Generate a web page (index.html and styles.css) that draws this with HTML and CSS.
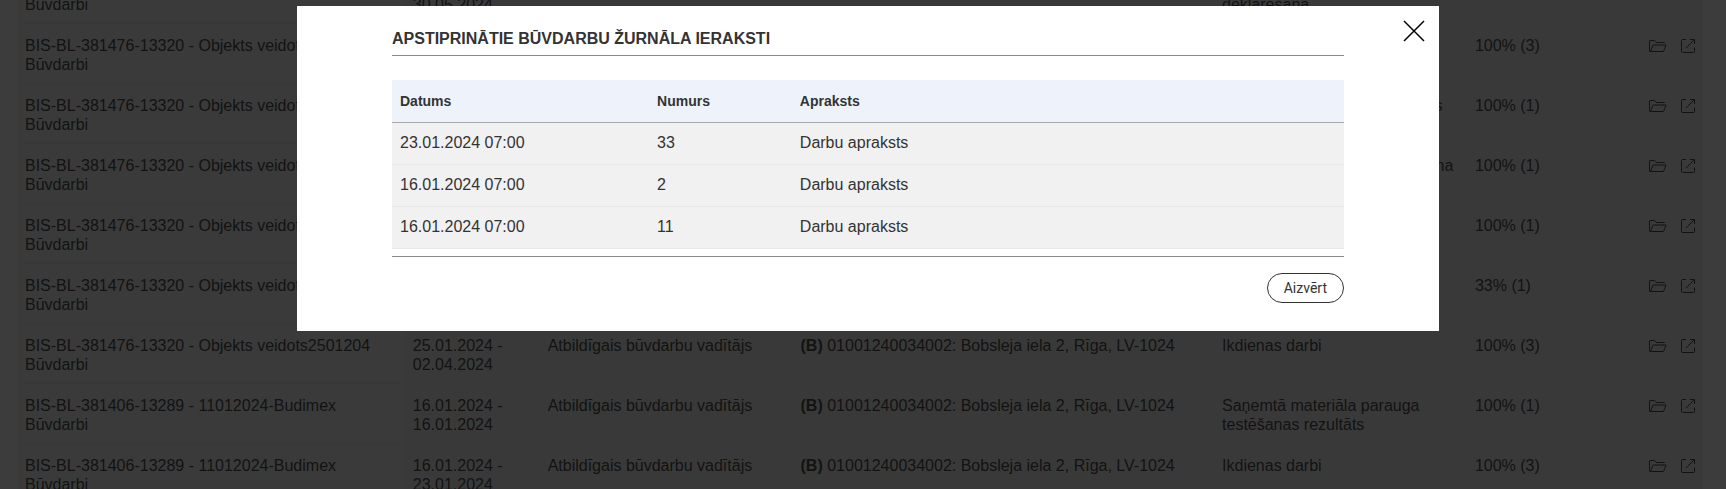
FILE: index.html
```html
<!DOCTYPE html>
<html lang="lv">
<head>
    <meta charset="UTF-8">
    <meta name="viewport" content="width=device-width, initial-scale=1.0">
    <title>Būvdarbu žurnāls</title>
    <link rel="stylesheet" href="styles.css">
</head>
<body>
    <svg class="sprite" aria-hidden="true">
        <symbol id="icon-folder" viewBox="0 0 18 14">
            <path d="M.5 12.500V2q0-.5.5-.5h4.500l2 2h8q.5 0 .5.5M1 12.500h13q.5 0 .7-.5l2.300-6h-12.500q-.5 0-.7.5l-2.300 6"/>
        </symbol>
        <symbol id="icon-open" viewBox="0 0 14 14">
            <path d="M5 .5H1.500q-1 0-1 1v11q0 1 1 1h11q1 0 1-1V8.500M5 9L13.500.5M9 .5h4.500V5"/>
        </symbol>
    </svg>

    <main class="page">
        <table class="journal">
            <colgroup>
                <col class="col-case">
                <col class="col-period">
                <col class="col-role">
                <col class="col-object">
                <col class="col-work">
                <col class="col-actions">
            </colgroup>
            <tbody id="journal-rows"></tbody>
        </table>
    </main>

    <div class="overlay">
        <div class="modal" role="dialog" aria-modal="true" aria-labelledby="modal-title">
            <button type="button" class="modal-close" aria-label="Aizvērt logu">
                <svg viewBox="0 0 20 20"><path d="M0 0L20 20M20 0L0 20"/></svg>
            </button>
            <h2 id="modal-title">Apstiprinātie būvdarbu žurnāla ieraksti</h2>
            <table class="entries">
                <thead>
                    <tr>
                        <th class="col-date">Datums</th>
                        <th class="col-number">Numurs</th>
                        <th>Apraksts</th>
                    </tr>
                </thead>
                <tbody>
                    <tr>
                        <td>23.01.2024 07:00</td>
                        <td>33</td>
                        <td>Darbu apraksts</td>
                    </tr>
                    <tr>
                        <td>16.01.2024 07:00</td>
                        <td>2</td>
                        <td>Darbu apraksts</td>
                    </tr>
                    <tr>
                        <td>16.01.2024 07:00</td>
                        <td>11</td>
                        <td>Darbu apraksts</td>
                    </tr>
                </tbody>
            </table>
            <div class="modal-footer">
                <button type="button" class="btn">Aizvērt</button>
            </div>
        </div>
    </div>

    <script src="script.js"></script>
</body>
</html>
```

FILE: styles.css
```css
* {
    box-sizing: border-box;
}
body {
    margin: 0;
    height: 100vh;
    overflow: hidden;
    background: #fff;
    color: #333;
    font-family: "Liberation Sans", Arial, sans-serif;
    font-size: 16px;
    line-height: 18px;
}
table {
    width: 100%;
    border-collapse: separate;
    border-spacing: 0;
    table-layout: fixed;
}
svg {
    display: block;
    fill: none;
    stroke: currentColor;
}
.sprite {
    display: none;
}

/* saraksts */
.page {
    padding: 0 23px 0 17px;
}
.journal {
    margin-top: -36px;
    background: #f1f1f1;
    line-height: 19px;
}
.col-case {
    width: 23%;
}
.col-period {
    width: 8%;
}
.col-role,
.col-work {
    width: 15%;
}
.col-object {
    width: 25%;
}
.col-actions {
    width: 14%;
}
.journal td {
    height: 60px;
    padding: 12px 8px 9px;
    border-bottom: 1px solid #eaeaea;
    vertical-align: top;
}
.journal td:first-child {
    background: #f6f6f6;
}
.progress {
    display: flex;
    justify-content: space-between;
}
.actions {
    display: flex;
    align-items: center;
    gap: 14px;
}
.actions a {
    color: inherit;
}
.icon-folder {
    width: 18px;
    height: 14px;
}
.icon-open {
    width: 14px;
    height: 14px;
}

/* modālais logs */
.overlay {
    position: fixed;
    inset: 0;
    padding: 6px 0 0 10px;
    background: rgba(11, 11, 11, 0.8);
}
.modal {
    position: relative;
    max-width: 1142px;
    margin: 0 auto;
    padding: 20px 95px 28px;
    background: #fff;
}
.modal h2 {
    margin: 0 0 24px;
    padding: 4px 0 7px;
    border-bottom: 1px solid #888;
    font-size: 16px;
    line-height: 18px;
    text-transform: uppercase;
}
.modal-close {
    position: absolute;
    top: 10px;
    right: 10px;
    padding: 5px;
    border: 0;
    background: none;
    color: #000;
    cursor: pointer;
}
.modal-close svg {
    width: 20px;
    height: 20px;
    stroke-width: 1.5;
    overflow: visible;
}
.entries th {
    height: 43px;
    padding: 0 8px;
    border-bottom: 1px solid #aaa;
    background: #eef3fb;
    font-size: 14px;
    text-align: left;
}
.col-date {
    width: 27%;
}
.col-number {
    width: 15%;
}
.entries td {
    height: 42px;
    padding: 0 8px 2px;
    border-bottom: 1px solid #e8e8e8;
    background: #f1f1f1;
}
.modal-footer {
    display: flex;
    justify-content: flex-end;
    margin-top: 7px;
    padding-top: 16px;
    border-top: 1px solid #888;
}
.btn {
    height: 30px;
    padding: 0 16px;
    border: 1px solid #333;
    border-radius: 15px;
    background: #fff;
    color: #333;
    font-family: Roboto, sans-serif;
    font-size: 14px;
    cursor: pointer;
}
```

FILE: script.js
```js
const address = '01001240034002: Bobsleja iela 2, Rīga, LV-1024';
const role = 'Atbildīgais būvdarbu vadītājs';

const rows = [
    { caseName: 'BIS-BL-381476-13320 - Objekts veidots2501204', from: '25.01.2024', to: '30.05.2024', work: 'Ekspluatācijas īpašību deklarēšana', progress: '100% (1)' },
    { caseName: 'BIS-BL-381476-13320 - Objekts veidots2501204', from: '25.01.2024', to: '02.04.2024', work: 'Ikdienas darbi', progress: '100% (3)' },
    { caseName: 'BIS-BL-381476-13320 - Objekts veidots2501204', from: '25.01.2024', to: '02.04.2024', work: 'Segto darbu pieņemšanas akts', progress: '100% (1)' },
    { caseName: 'BIS-BL-381476-13320 - Objekts veidots2501204', from: '25.01.2024', to: '02.04.2024', work: 'Betona konstrukciju pieņemšana', progress: '100% (1)' },
    { caseName: 'BIS-BL-381476-13320 - Objekts veidots2501204', from: '25.01.2024', to: '02.04.2024', work: 'Ikdienas darbi', progress: '100% (1)' },
    { caseName: 'BIS-BL-381476-13320 - Objekts veidots2501204', from: '25.01.2024', to: '02.04.2024', work: 'Ikdienas darbi', progress: '33% (1)' },
    { caseName: 'BIS-BL-381476-13320 - Objekts veidots2501204', from: '25.01.2024', to: '02.04.2024', work: 'Ikdienas darbi', progress: '100% (3)' },
    { caseName: 'BIS-BL-381406-13289 - 11012024-Budimex', from: '16.01.2024', to: '16.01.2024', work: 'Saņemtā materiāla parauga testēšanas rezultāts', progress: '100% (1)' },
    { caseName: 'BIS-BL-381406-13289 - 11012024-Budimex', from: '16.01.2024', to: '23.01.2024', work: 'Ikdienas darbi', progress: '100% (3)' }
];

document.getElementById('journal-rows').innerHTML = rows.map(row => `
    <tr>
        <td>${row.caseName}<br>Būvdarbi</td>
        <td>${row.from} -<br>${row.to}</td>
        <td>${role}</td>
        <td><b>(B)</b> ${address}</td>
        <td>${row.work}</td>
        <td>
            <div class="progress">
                <span>${row.progress}</span>
                <span class="actions">
                    <a href="#" aria-label="Atvērt mapi"><svg class="icon-folder"><use href="#icon-folder"/></svg></a>
                    <a href="#" aria-label="Atvērt ierakstu"><svg class="icon-open"><use href="#icon-open"/></svg></a>
                </span>
            </div>
        </td>
    </tr>`).join('');
```
